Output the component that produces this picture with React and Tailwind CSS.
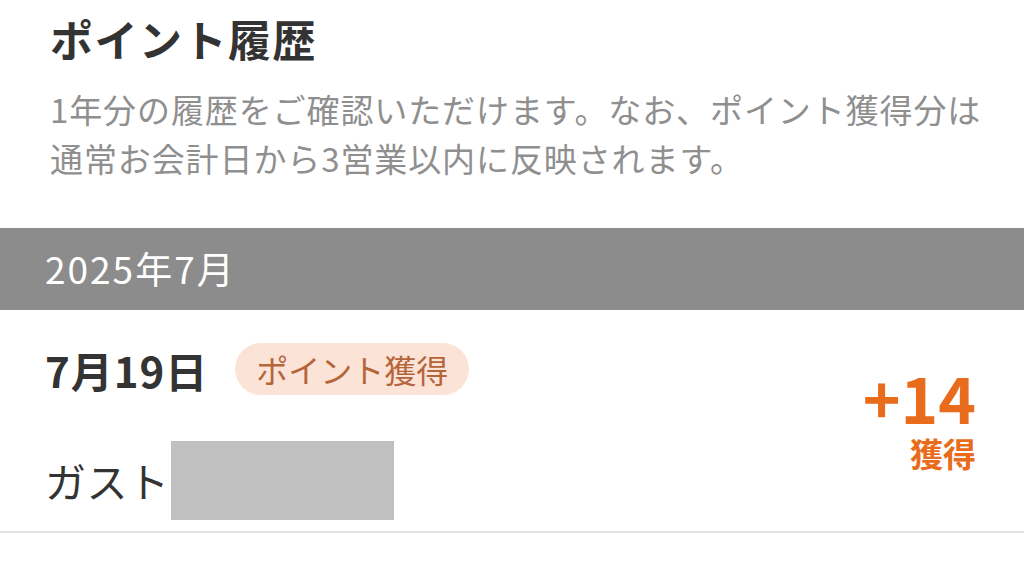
import React from 'react';

const font = { fontFamily: '"Noto Sans CJK JP", "Noto Sans", sans-serif' };

const History = () => {
  return (
    <div className="w-[1024px] h-[565px] bg-white overflow-hidden" style={font}>
      {/* heading */}
      <div className="pl-[50px] pt-[13px]">
        <h1 className="text-[43px] leading-[50px] font-bold tracking-[1.5px] text-[#333333]">ポイント履歴</h1>
        <p className="mt-[22px] text-[33px] leading-[49px] tracking-[0.9px] text-[#8f8f8f]">
          1年分の履歴をご確認いただけます。なお、ポイント獲得分は
          <br />
          通常お会計日から3営業以内に反映されます。
        </p>
      </div>

      {/* month bar */}
      <div className="mt-[45px] h-[82px] bg-[#8c8c8c] flex items-center pl-[45px]">
        <span className="text-[37px] tracking-[2px] text-white">2025年7月</span>
      </div>

      {/* row */}
      <div className="flex justify-between border-b-2 border-[#e3e3e3] pl-[45px] pr-[48px]">
        <div className="pt-[33px] pb-[11px]">
          <div className="flex items-center h-[52px]">
            <span className="text-[42px] font-bold tracking-[1px] text-[#333333]">7月19日</span>
            <span className="ml-[27px] h-[52px] px-[21px] flex items-center rounded-full bg-[#fce3d7] text-[32px] text-[#b5653a]">
              ポイント獲得
            </span>
          </div>
          <div className="mt-[46px] flex items-center">
            <span className="text-[41px] tracking-[0.5px] text-[#333333]">ガスト</span>
            <span className="ml-[1px] w-[223px] h-[79px] bg-[#c0c0c0]" />
          </div>
        </div>
        <div className="flex flex-col items-end self-center">
          <span className="text-[64px] leading-[54px] font-bold text-[#e96c1c]">+14</span>
          <span className="mt-[10px] text-[33px] leading-[40px] font-bold text-[#e96c1c]">獲得</span>
        </div>
      </div>
    </div>
  );
};

export default function App() {
  return <History />;
}
